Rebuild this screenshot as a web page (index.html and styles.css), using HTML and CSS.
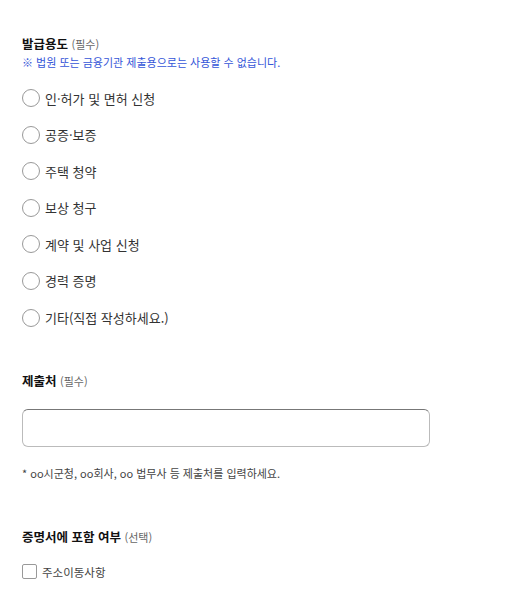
FILE: index.html
```html
<!DOCTYPE html>
<html lang="ko">
<head>
<meta charset="utf-8">
<link rel="stylesheet" href="styles.css">
</head>
<body>
<div class="form">
  <section class="group">
    <h2 class="title">발급용도 <span class="sub">(필수)</span></h2>
    <p class="note">※ 법원 또는 금융기관 제출용으로는 사용할 수 없습니다.</p>
    <ul class="radios">
      <li class="opt"><span class="radio"></span><span>인·허가 및 면허 신청</span></li>
      <li class="opt"><span class="radio"></span><span>공증·보증</span></li>
      <li class="opt"><span class="radio"></span><span>주택 청약</span></li>
      <li class="opt"><span class="radio"></span><span>보상 청구</span></li>
      <li class="opt"><span class="radio"></span><span>계약 및 사업 신청</span></li>
      <li class="opt"><span class="radio"></span><span>경력 증명</span></li>
      <li class="opt"><span class="radio"></span><span>기타(직접 작성하세요.)</span></li>
    </ul>
  </section>
  <section class="group g2">
    <h2 class="title">제출처 <span class="sub">(필수)</span></h2>
    <div class="input"></div>
    <p class="hint">* oo시군청, oo회사, oo 법무사 등 제출처를 입력하세요.</p>
  </section>
  <section class="group g3">
    <h2 class="title">증명서에 포함 여부 <span class="sub">(선택)</span></h2>
    <div class="check"><span class="box"></span><span>주소이동사항</span></div>
  </section>
</div>
</body>
</html>
```
FILE: styles.css
```css
html, body {
  margin: 0;
  padding: 0;
  background: #fff;
}
body {
  font-family: "Noto Sans CJK KR", "Noto Sans", sans-serif;
  color: #222;
}
.form {
  padding: 34px 0 0 22px;
}
.title {
  margin: 0;
  font-size: 12.5px;
  font-weight: 700;
  line-height: 20px;
  color: #111;
}
.sub {
  font-size: 11px;
  font-weight: 400;
  color: #666;
}
.note {
  margin: -1px 0 0;
  font-size: 11px;
  line-height: 18px;
  color: #3556d8;
}
.radios {
  list-style: none;
  margin: 17px 0 0;
  padding: 0;
  display: flex;
  flex-direction: column;
  gap: 16.6px;
}
.opt {
  display: flex;
  align-items: center;
  gap: 5px;
  height: 20px;
  font-size: 13px;
  color: #333;
}
.radio {
  width: 16px;
  height: 16px;
  border: 1px solid #999;
  border-radius: 50%;
  box-sizing: content-box;
}
.g2 {
  margin-top: 43px;
}
.input {
  margin-top: 18px;
  width: 408px;
  height: 38px;
  box-sizing: border-box;
  border: 1px solid #bbb;
  border-top-color: #777;
  border-radius: 6px;
}
.hint {
  margin: 17px 0 0;
  font-size: 11px;
  line-height: 18px;
  color: #444;
}
.g3 {
  margin-top: 45px;
}
.check {
  margin-top: 17px;
  display: flex;
  align-items: center;
  gap: 5px;
  font-size: 11.5px;
  color: #444;
}
.box {
  width: 13px;
  height: 13px;
  border: 1px solid #999;
  border-radius: 2px;
}
```
